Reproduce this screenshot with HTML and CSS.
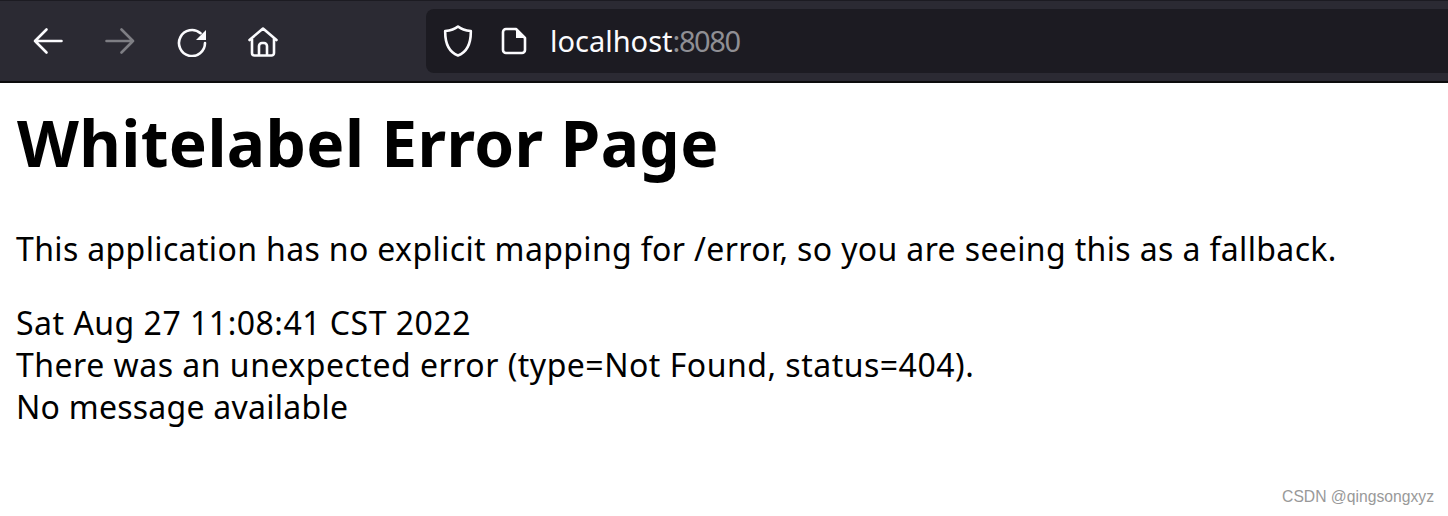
FILE: index.html
```html
<!DOCTYPE html>
<html lang="en">
<head>
    <meta charset="UTF-8">
    <title>Whitelabel Error Page</title>
    <link rel="stylesheet" href="styles.css">
</head>
<body>
    <header class="toolbar">
        <nav class="nav-buttons">
            <svg class="icon" viewBox="0 0 32 32"><path d="M29.500 16H3M14.500 4.500 3 16l11.500 11.500"/></svg>
            <svg class="icon dim" viewBox="0 0 32 32"><path d="M2.500 16H29M17.500 4.500 29 16 17.500 27.500"/></svg>
            <svg class="icon" viewBox="0 0 32 32"><path d="M29 18a13 13 0 1 1-4.500-9.800"/><path class="solid" d="M30 5v10H20z"/></svg>
            <svg class="icon" viewBox="0 0 32 32"><path d="M1.500 15 15 3.500 28.500 15M4 13v15a2.500 2.500 0 0 0 2.500 2.500h17a2.500 2.500 0 0 0 2.500-2.500V13M11 30.500V21a3 3 0 0 1 3-3h2a3 3 0 0 1 3 3v9.500"/></svg>
        </nav>
        <div class="urlbar">
            <svg class="icon shield" viewBox="0 0 32 32"><path d="M16 1.500c3 2.500 7 4 12.800 4.500C29 18 25 27 16 30.500 7 27 3 18 3.200 6 9 5.500 13 4 16 1.500z"/></svg>
            <svg class="icon page" viewBox="0 0 32 32"><path d="M18 4H8a3 3 0 0 0-3 3v18a3 3 0 0 0 3 3h16a3 3 0 0 0 3-3V13z"/><path class="solid" d="M18 4l9 9h-9z"/></svg>
            <span class="address">localhost<span class="port">:8080</span></span>
        </div>
    </header>

    <main class="content">
        <h1>Whitelabel Error Page</h1>
        <p>This application has no explicit mapping for /error, so you are seeing this as a fallback.</p>
        <div class="detail">Sat Aug 27 11:08:41 CST 2022</div>
        <div class="detail">There was an unexpected error (type=Not Found, status=404).</div>
        <div class="note">No message available</div>
    </main>

    <div class="watermark">CSDN @qingsongxyz</div>
</body>
</html>
```

FILE: styles.css
```css
body {
    margin: 0;
    height: 516px;
    overflow: hidden;
    background-color: #fff;
    color: #000;
    font-family: 'Noto Sans', sans-serif;
    font-size: 32px;
    line-height: 42px;
    letter-spacing: 0.36px;
}

.toolbar {
    display: flex;
    height: 80px;
    background-color: #2b2a33;
    border-top: 1px solid #1c1b22;
    border-bottom: 2px solid #0c0c0d;
    box-sizing: content-box;
    letter-spacing: 0;
}

.nav-buttons {
    display: flex;
    align-items: center;
    gap: 40px;
    width: 426px;
    padding-left: 32px;
    box-sizing: border-box;
}

.icon {
    width: 32px;
    height: 32px;
    flex: none;
    fill: none;
    stroke: #fbfbfe;
    stroke-width: 2.6;
    stroke-linecap: round;
    stroke-linejoin: round;
}

.icon .solid {
    fill: #fbfbfe;
    stroke: none;
}

.dim {
    opacity: 0.4;
}

.urlbar {
    flex: 1;
    display: flex;
    align-items: center;
    height: 64px;
    margin-top: 8px;
    padding-left: 16px;
    background-color: #1c1b22;
    border-radius: 8px 0 0 8px;
}

.page {
    margin-left: 24px;
}

.address {
    margin-left: 20px;
    color: #fbfbfe;
    font-size: 29px;
}

.port {
    color: #8f8f94;
    letter-spacing: -1.4px;
}

.content {
    padding: 0 16px;
}

h1 {
    margin: 17px 0 0 1px;
    font-size: 64px;
    line-height: 86px;
    font-weight: 700;
}

p {
    margin: 42px 0 32px;
}

.detail {
    letter-spacing: 0.5px;
}

.note {
    letter-spacing: 0.25px;
}

.watermark {
    position: absolute;
    right: 14px;
    bottom: 9px;
    color: #999;
    font-family: 'Liberation Sans', sans-serif;
    font-size: 15.7px;
    line-height: 20px;
    letter-spacing: 0;
}
```
